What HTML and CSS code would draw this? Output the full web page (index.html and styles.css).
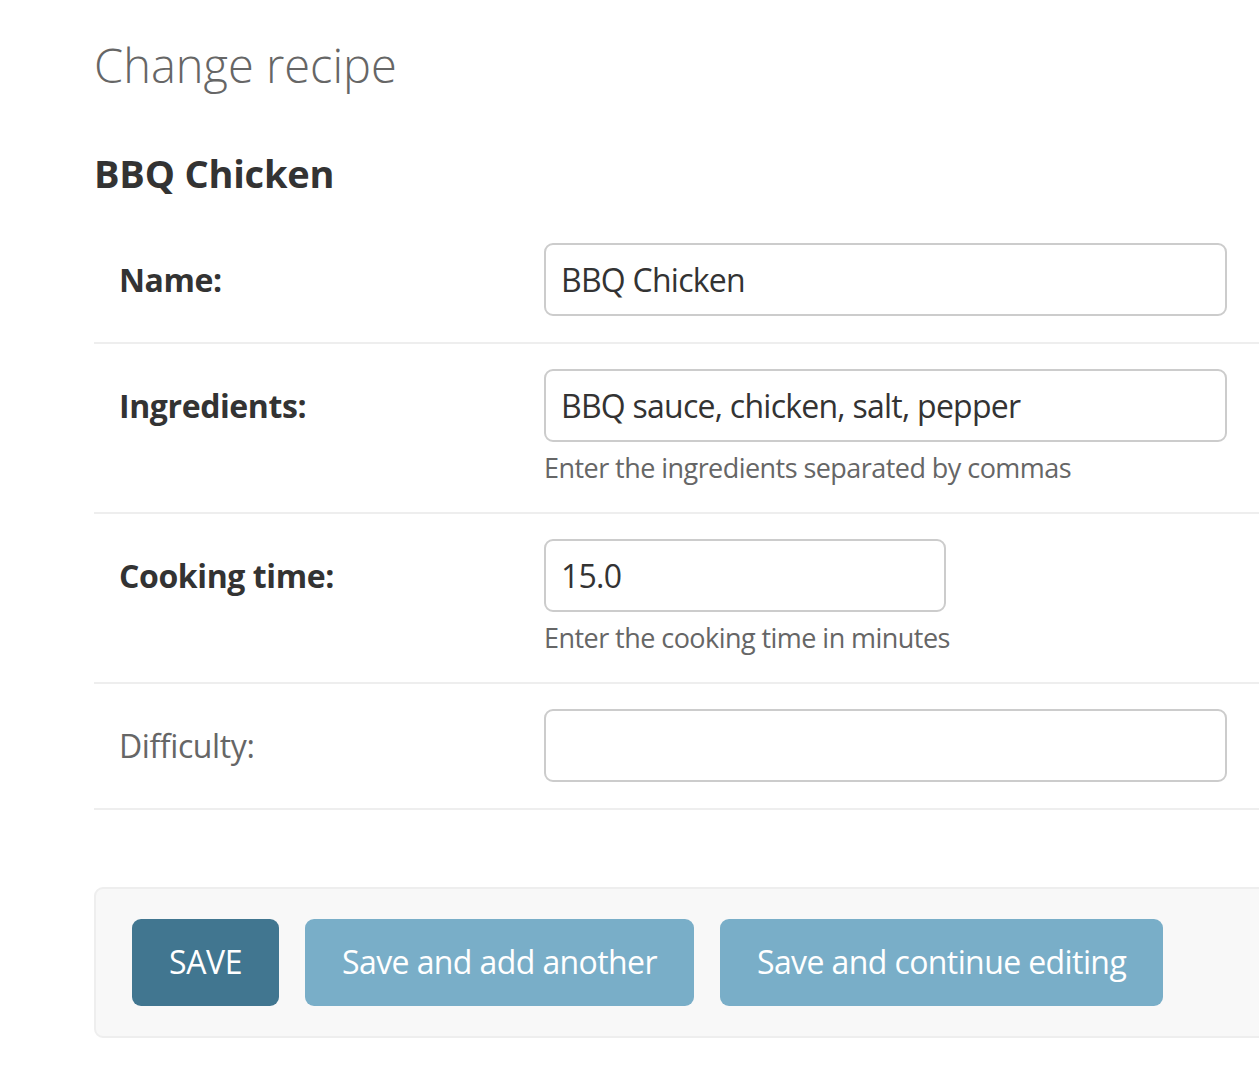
FILE: index.html
```html
<!DOCTYPE html>
<html lang="en">
<head>
<meta charset="utf-8">
<title>Change recipe</title>
<link rel="stylesheet" href="styles.css">
</head>
<body>
<div class="content">
  <h1 class="page-title">Change recipe</h1>
  <h2 class="object-title">BBQ Chicken</h2>
  <form class="form">
    <fieldset class="fieldset">
      <div class="form-row">
        <label class="field-label required">Name:</label>
        <div class="field-box">
          <div class="text-input wide">BBQ Chicken</div>
        </div>
      </div>
      <div class="form-row">
        <label class="field-label required">Ingredients:</label>
        <div class="field-box">
          <div class="text-input wide">BBQ sauce, chicken, salt, pepper</div>
          <div class="help">Enter the ingredients separated by commas</div>
        </div>
      </div>
      <div class="form-row">
        <label class="field-label required">Cooking time:</label>
        <div class="field-box">
          <div class="text-input narrow">15.0</div>
          <div class="help">Enter the cooking time in minutes</div>
        </div>
      </div>
      <div class="form-row">
        <label class="field-label">Difficulty:</label>
        <div class="field-box">
          <div class="text-input wide"></div>
        </div>
      </div>
    </fieldset>
    <div class="submit-row">
      <span class="btn btn-default">SAVE</span>
      <span class="btn">Save and add another</span>
      <span class="btn">Save and continue editing</span>
    </div>
  </form>
</div>
</body>
</html>
```
FILE: styles.css
```css
html, body {
  margin: 0;
  padding: 0;
  background: #fff;
  overflow: hidden;
}
body {
  font-family: "Open Sans", "Noto Sans", sans-serif;
  color: #333;
}
.content {
  padding: 0 0 0 94px;
  width: 1300px;
}
.page-title {
  margin: 0;
  padding: 34px 0 0 0;
  font-size: 47px;
  font-weight: 300;
  color: #666;
  line-height: 62px;
  letter-spacing: 0;
}
.object-title {
  margin: 0;
  padding: 52px 0 0 0;
  font-size: 38px;
  font-weight: 700;
  color: #333;
  line-height: 50px;
  letter-spacing: -0.2px;
}
.form { margin: 0; }
.fieldset {
  margin: 20px 0 0 0;
  padding: 0;
  border: 0;
}
.form-row {
  display: flex;
  align-items: flex-start;
  padding: 25px 0 26px 25px;
  border-bottom: 2px solid #eee;
}
.field-label {
  width: 425px;
  flex: none;
  font-size: 32px;
  line-height: 73px;
  color: #666;
  letter-spacing: -0.4px;
}
.field-label.required {
  font-weight: 700;
  color: #333;
}
.field-box {
  display: flex;
  flex-direction: column;
}
.text-input {
  box-sizing: border-box;
  height: 73px;
  border: 2px solid #ccc;
  border-radius: 9px;
  padding: 0 15px;
  font-size: 32px;
  line-height: 69px;
  color: #333;
  letter-spacing: -0.75px;
  white-space: nowrap;
}
.text-input.wide { width: 683px; }
.text-input.narrow { width: 402px; }
.help {
  font-size: 27px;
  color: #666;
  line-height: 36px;
  padding-top: 8px;
  letter-spacing: -0.55px;
}
.submit-row {
  display: flex;
  gap: 26px;
  margin-top: 77px;
  padding: 30px 36px;
  background: #f8f8f8;
  border: 2px solid #eee;
  border-radius: 9px;
  width: 1300px;
}
.btn {
  display: inline-block;
  height: 87px;
  line-height: 85px;
  padding: 0 37px;
  border-radius: 9px;
  background: #79aec8;
  color: #fff;
  font-size: 32px;
  letter-spacing: -0.6px;
  white-space: nowrap;
}
.btn-default {
  background: #417690;
  padding: 0 37px;
  letter-spacing: -0.4px;
}
```
